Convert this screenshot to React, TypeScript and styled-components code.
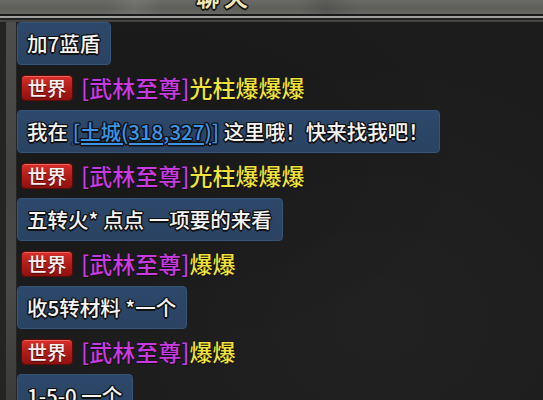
import styled, { createGlobalStyle } from "styled-components";
import { Fragment } from "react";

const GlobalStyle = createGlobalStyle`
    html, body {
        margin: 0;
        padding: 0;
        background: #1c1c1c;
    }
    * {
        box-sizing: border-box;
    }
`

const outline = `
    -1px -1px 0 #111, 1px -1px 0 #111, -1px 1px 0 #111, 1px 1px 0 #111,
    0 -1.5px 0 #111, 0 1.5px 0 #111, -1.5px 0 0 #111, 1.5px 0 0 #111
`

const Frame = styled.div`
    width: 543px;
    height: 400px;
    overflow: hidden;
    display: flex;
    flex-direction: column;
    font-family: "Noto Sans CJK SC", "Noto Sans", sans-serif;
    background:
        radial-gradient(ellipse at 70% 80%, rgba(255,255,255,0.025), transparent 60%),
        radial-gradient(ellipse at 30% 40%, rgba(0,0,0,0.15), transparent 60%),
        #1c1c1c;
`

const TopBar = styled.div`
    height: 14px;
    flex-shrink: 0;
    overflow: hidden;
    display: flex;
    justify-content: flex-start;
    padding-left: 196px;
    background:
        linear-gradient(100deg, transparent 20%, rgba(255,255,255,0.08) 25%, transparent 30%),
        linear-gradient(80deg, transparent 55%, rgba(0,0,0,0.12) 60%, transparent 66%),
        linear-gradient(180deg, #6a6a67 0%, #5e5e5b 60%, #676764 100%);
`

const Title = styled.div`
    margin-top: -16px;
    font-size: 24px;
    line-height: 24px;
    font-weight: 700;
    letter-spacing: 4px;
    color: #f2e6b4;
    text-shadow: ${outline};
`

const Divider = styled.div`
    height: 8px;
    flex-shrink: 0;
    background: linear-gradient(180deg,
        #1a1a1a 0px, #1a1a1a 2px,
        #a6a6a4 2px, #9a9a98 4px,
        #222 4px, #222 6px,
        #4c4c4a 6px, #3e3e3c 8px);
`

const Body = styled.div`
    flex: 1;
    display: flex;
    min-height: 0;
`

const LeftRail = styled.div`
    width: 17px;
    flex-shrink: 0;
    display: flex;
    background: #242424;
    &::after {
        content: "";
        margin-left: 6px;
        width: 10px;
        background: linear-gradient(180deg, #4e4e4c, #444442 40%, #4a4a48 70%, #3c3c3a);
    }
`

const ChatList = styled.div`
    flex: 1;
    display: flex;
    flex-direction: column;
    align-items: flex-start;
    gap: 10px;
`

const Bubble = styled.div`
    height: 43px;
    flex-shrink: 0;
    display: flex;
    align-items: center;
    padding: 0 10px 1px 9px;
    border-radius: 4px;
    background: linear-gradient(180deg, #2d486a 0%, #2a4363 100%);
    border: 1px solid #35557a;
    color: #f4f4f4;
    font-size: 20.5px;
    font-weight: 500;
    white-space: pre;
    text-shadow: ${outline};
`

const Link = styled.span`
    color: #3d93e6;
    text-decoration: underline;
    text-decoration-color: #3d93e6;
    text-underline-offset: 3px;
`

const SenderRow = styled.div`
    height: 25px;
    flex-shrink: 0;
    display: flex;
    align-items: center;
    gap: 8px;
    padding-left: 4px;
`

const ChannelBadge = styled.div`
    width: 52px;
    height: 26px;
    display: flex;
    align-items: center;
    justify-content: center;
    border-radius: 4px;
    background: linear-gradient(180deg, #d8302a 0%, #b31c18 50%, #8c1210 100%);
    border: 1px solid #5a0c0a;
    box-shadow: inset 0 1px 0 rgba(255,170,160,0.45);
    color: #f6f0f0;
    font-size: 19.5px;
    font-weight: 500;
    line-height: 1;
    text-shadow: 0 1px 1px #4a0806;
`

const Name = styled.div`
    display: flex;
    font-size: 23px;
    font-weight: 500;
    line-height: 1;
    white-space: pre;
`

const Part = styled.span<{ tone: string }>`
    color: ${props => props.tone};
    text-shadow: 0 0 1px #000, 1px 1px 0 #111;
`

const TITLE_COLOR = "#c93be0"
const NAME_COLOR = "#f0e23a"

type Message = {
    sender?: string
    text: React.ReactNode
}

const messages: Message[] = [
    { text: "加7蓝盾" },
    { sender: "光柱爆爆爆", text: <>我在 <Link>[土城(318,327)]</Link> 这里哦！快来找我吧！</> },
    { sender: "光柱爆爆爆", text: "五转火* 点点 一项要的来看" },
    { sender: "爆爆", text: "收5转材料 *一个" },
    { sender: "爆爆", text: "1-5-0 一个" },
]

const Sender = ({ name }: { name: string }) => (
    <SenderRow>
        <ChannelBadge>世界</ChannelBadge>
        <Name>
            <Part tone={TITLE_COLOR}>[武林至尊]</Part>
            <Part tone={NAME_COLOR}>{name}</Part>
        </Name>
    </SenderRow>
)

export default function App() {
    return (
        <>
            <GlobalStyle />
            <Frame>
                <TopBar>
                    <Title>聊天</Title>
                </TopBar>
                <Divider />
                <Body>
                    <LeftRail />
                    <ChatList>
                        {messages.map((msg, i) => (
                            <Fragment key={i}>
                                {msg.sender && <Sender name={msg.sender} />}
                                <Bubble>{msg.text}</Bubble>
                            </Fragment>
                        ))}
                    </ChatList>
                </Body>
            </Frame>
        </>
    )
}
